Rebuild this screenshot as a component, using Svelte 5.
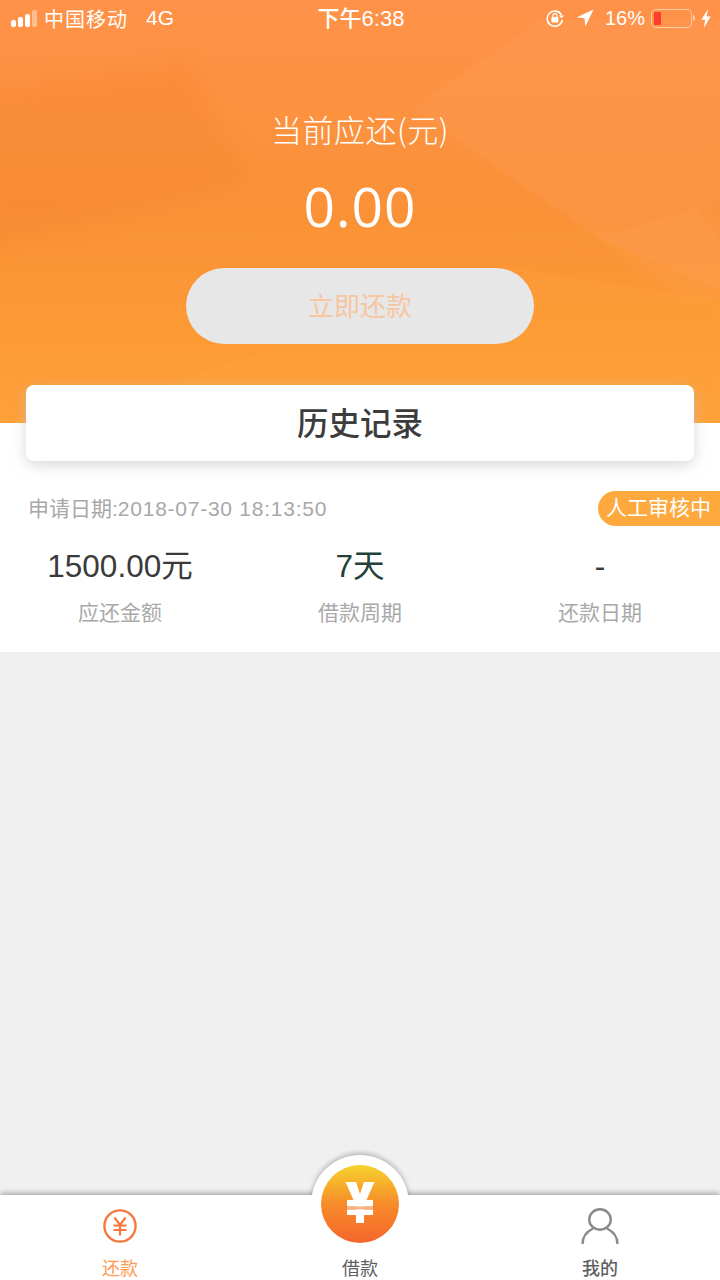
<script>
  const stats = [
    { value: '1500.00元', label: '应还金额', cls: '' },
    { value: '7天', label: '借款周期', cls: 'teal' },
    { value: '-', label: '还款日期', cls: '' }
  ];
</script>

<div class="page">
  <section class="hero">
    <svg class="hero-bg" viewBox="0 0 720 423" preserveAspectRatio="none" aria-hidden="true">
      <defs>
        <linearGradient id="heroFill" x1="0" y1="0" x2="0" y2="1">
          <stop offset="0" stop-color="#ff9249" />
          <stop offset="0.5" stop-color="#fa9137" />
          <stop offset="0.8" stop-color="#fd9a35" />
          <stop offset="1" stop-color="#ffa138" />
        </linearGradient>
        <filter id="soft" x="-20%" y="-20%" width="140%" height="140%">
          <feGaussianBlur stdDeviation="9" />
        </filter>
        <filter id="softer" x="-20%" y="-20%" width="140%" height="140%">
          <feGaussianBlur stdDeviation="1.500" />
        </filter>
      </defs>
      <rect width="720" height="423" fill="url(#heroFill)" />
      <polygon points="-20,90 190,62 250,182 -20,250" fill="#f58732" opacity="0.45" filter="url(#soft)" />
      <polygon points="413,108 540,20 720,20 720,290 596,237" fill="#ff9d58" opacity="0.32" filter="url(#softer)" />
      <polygon points="505,267 697,208 720,240 720,300 688,302 600,240" fill="#ffa65c" opacity="0.16" filter="url(#softer)" />
      <polygon points="165,385 505,267 720,300 720,423 100,423" fill="#ffa83e" opacity="0.22" filter="url(#softer)" />
    </svg>

    <div class="status">
      <div class="status-left">
        <span class="signal"><i></i><i></i><i></i><i class="dim"></i></span>
        <span class="carrier">中国移动</span>
        <span class="net">4G</span>
      </div>
      <div class="status-time">下午6:38</div>
      <div class="status-right">
        <svg width="20" height="20" viewBox="0 0 20 20" fill="none" stroke="#fff" stroke-width="1.6">
          <path d="M16.500 7A7.600 7.600 0 1 0 17.300 12" />
          <path d="M19 7.600 16.400 10.200 13.800 7.600z" fill="#fff" stroke="none" />
          <rect x="6.400" y="9" width="7" height="5.400" rx="0.8" fill="#fff" stroke="none" />
          <path d="M7.900 9.400V7.600a2 2 0 0 1 4 0v1.800" stroke-width="1.200" />
        </svg>
        <svg class="arrow" width="18" height="18" viewBox="0 0 18 18"><path d="M17.500 .5 .5 8.400l8 .9 .9 8.200z" fill="#fff" /></svg>
        <span class="pct">16%</span>
        <span class="battery"><b></b></span>
        <span class="nub"></span>
        <svg class="bolt" width="10" height="19" viewBox="0 0 10 19"><path d="M7 0 .3 10.800h3.900L2.700 19 9.800 7.400H5.600z" fill="#fff" /></svg>
      </div>
    </div>

    <h2 class="due-title">当前应还(元)</h2>
    <div class="amount">0.00</div>
    <button class="repay">立即还款</button>
  </section>

  <section class="history">
    <div class="tab-card">历史记录</div>

    <div class="record">
      <div class="record-head">
        <span class="date">申请日期:<span class="stamp">2018-07-30 18:13:50</span></span>
        <span class="badge">人工审核中</span>
      </div>
      <div class="stats">
        {#each stats as s}
          <div class="stat">
            <div class="val {s.cls}">{s.value}</div>
            <div class="lab">{s.label}</div>
          </div>
        {/each}
      </div>
    </div>
  </section>

  <div class="empty"></div>

  <nav class="tabbar">
    <div class="tab active">
      <svg width="36" height="36" viewBox="0 0 36 36" fill="none" stroke="#f5793f" stroke-width="2.400">
        <circle cx="18" cy="18" r="15.600" />
        <path d="M12.500 9.500 18 17l5.500-7.500M11.500 17.500h13M11.500 22h13M18 17v10.500" stroke-width="2.200" />
      </svg>
      <span>还款</span>
    </div>
    <div class="tab center">
      <div class="coin">
        <svg width="30" height="41" viewBox="0 0 30 41">
          <path d="M.500 0H11l4 12 4-12h10.500L21.500 18H28v6.500h-9V27.500h9V33h-9v8h-8v-8H2v-5.500h9v-3H2V18h6.500z" fill="#fff" />
          <rect x="2" y="24.500" width="26" height="3" fill="#f9b283" />
        </svg>
      </div>
      <span>借款</span>
    </div>
    <div class="tab me">
      <svg width="38" height="38" viewBox="0 0 38 38" fill="none" stroke="#8a8a8a" stroke-width="2.400">
        <ellipse cx="19" cy="11.500" rx="10.800" ry="10.200" />
        <path d="M1.500 36C1.500 29 6 23.500 12 20.500M36.500 36C36.500 29 32 23.500 26 20.500" />
      </svg>
      <span>我的</span>
    </div>
  </nav>
</div>

<style>
  :global(body) {
    margin: 0;
    background: #f0f0f0;
  }

  .page {
    position: relative;
    width: 720px;
    height: 1280px;
    display: flex;
    flex-direction: column;
    overflow: hidden;
    font-family: "Liberation Sans", "Noto Sans CJK SC", sans-serif;
    background: #f0f0f0;
  }

  .hero {
    position: relative;
    height: 423px;
    flex: none;
    display: flex;
    flex-direction: column;
    align-items: center;
    color: #fff;
  }

  .hero-bg {
    position: absolute;
    inset: 0;
    width: 100%;
    height: 100%;
  }

  .hero > *:not(.hero-bg) {
    position: relative;
  }

  .status {
    width: 100%;
    height: 35px;
    box-sizing: border-box;
    padding: 0 9px 0 11px;
    display: grid;
    grid-template-columns: 1fr auto 1fr;
    align-items: center;
    font-size: 20px;
  }

  .status-left,
  .status-right {
    display: flex;
    align-items: center;
  }

  .status-right {
    justify-content: flex-end;
  }

  .signal {
    display: flex;
    align-items: flex-end;
    gap: 2px;
    height: 17px;
    margin-right: 7px;
  }

  .signal i {
    width: 5px;
    background: #fff;
    border-radius: 2px;
  }

  .signal i:nth-child(1) { height: 7px; }
  .signal i:nth-child(2) { height: 10px; }
  .signal i:nth-child(3) { height: 13px; }
  .signal i:nth-child(4) { height: 17px; }
  .signal .dim { background: rgba(255, 255, 255, 0.4); }

  .carrier {
    font-size: 20px;
    letter-spacing: 1px;
  }

  .net {
    margin-left: 18px;
    font-size: 21px;
  }

  .status-time {
    font-size: 22px;
    font-weight: 500;
    padding-bottom: 4px;
  }

  .arrow {
    margin-left: 11px;
  }

  .pct {
    margin-left: 11px;
    font-size: 20px;
  }

  .battery {
    margin-left: 6px;
    width: 41px;
    height: 19px;
    box-sizing: border-box;
    border: 1.5px solid rgba(255, 255, 255, 0.5);
    border-radius: 5px;
    padding: 2px;
    display: flex;
  }

  .battery b {
    width: 7px;
    background: #ff3b30;
    border-radius: 1px;
  }

  .nub {
    width: 2px;
    height: 6px;
    margin-left: 1px;
    background: rgba(255, 255, 255, 0.5);
    border-radius: 0 2px 2px 0;
  }

  .bolt {
    margin-left: 6px;
  }

  .due-title {
    margin: 72px 0 0;
    height: 44px;
    line-height: 44px;
    font-size: 31px;
    font-weight: 300;
    letter-spacing: 0.5px;
    font-family: "Noto Sans CJK SC", sans-serif;
  }

  .amount {
    margin-top: 26px;
    height: 58px;
    line-height: 58px;
    font-family: "Open Sans", "Liberation Sans", sans-serif;
    font-size: 55px;
    font-weight: 400;
    letter-spacing: 1px;
  }

  .repay {
    margin-top: 33px;
    width: 348px;
    height: 76px;
    border: 0;
    border-radius: 38px;
    background: #e7e7e7;
    color: #f6c6a0;
    font-family: inherit;
    font-size: 26px;
    padding: 0 0 4px;
  }

  .history {
    flex: none;
    background: #fff;
  }

  .tab-card {
    position: relative;
    margin: -38px 26px 0;
    height: 76px;
    box-sizing: border-box;
    padding-bottom: 5px;
    background: #fff;
    border-radius: 8px;
    box-shadow: 0 4px 14px rgba(190, 190, 190, 0.6);
    display: flex;
    align-items: center;
    justify-content: center;
    font-size: 31.500px;
    font-weight: 500;
    color: #3c3c3c;
  }

  .record {
    height: 191px;
    box-sizing: border-box;
    padding-top: 30px;
  }

  .record-head {
    display: flex;
    align-items: center;
    justify-content: space-between;
    padding-left: 28px;
    height: 35px;
  }

  .date {
    font-size: 21px;
    padding-bottom: 3px;
    color: #a8a8a8;
  }

  .stamp {
    letter-spacing: 0.75px;
  }

  .badge {
    height: 35px;
    line-height: 33px;
    width: 122px;
    box-sizing: border-box;
    padding-left: 8px;
    border-radius: 18px 0 0 18px;
    background: #fda93d;
    color: #fff;
    font-size: 21px;
    white-space: nowrap;
  }

  .stats {
    display: grid;
    grid-template-columns: repeat(3, 1fr);
    margin-top: 18px;
    text-align: center;
  }

  .val {
    font-size: 31.500px;
    line-height: 44px;
    color: #3a3a3a;
  }

  .val.teal {
    color: #24403c;
  }

  .lab {
    margin-top: 10px;
    font-size: 21px;
    line-height: 30px;
    color: #a9a9a9;
  }

  .empty {
    flex: 1;
  }

  .tabbar {
    position: relative;
    flex: none;
    height: 85px;
    background: #fff;
    box-shadow: 0 -2px 5px rgba(0, 0, 0, 0.3);
    display: grid;
    grid-template-columns: repeat(3, 1fr);
  }

  .tab {
    display: flex;
    flex-direction: column;
    align-items: center;
    justify-content: flex-end;
    position: relative;
    font-size: 18px;
    line-height: 26px;
    color: #5f5f5f;
    gap: 12px;
  }

  .tab span {
    margin-bottom: -2px;
  }

  .tab.active {
    color: #ff9b50;
  }

  .tab.me {
    gap: 10px;
    font-weight: 500;
  }

  .tab.center::before {
    content: "";
    position: absolute;
    top: -40px;
    left: 50%;
    margin-left: -49px;
    width: 98px;
    height: 98px;
    border-radius: 50%;
    background: #fff;
    box-shadow: 0 -2px 5px rgba(0, 0, 0, 0.25);
    clip-path: inset(-10px -10px 58px -10px);
  }

  .coin {
    position: absolute;
    top: -30px;
    left: 50%;
    margin-left: -39px;
    width: 78px;
    height: 78px;
    padding-bottom: 3px;
    box-sizing: border-box;
    border-radius: 50%;
    background: linear-gradient(#f6d22c, #f78c2a 50%, #f5652b);
    display: flex;
    align-items: center;
    justify-content: center;
  }
</style>
